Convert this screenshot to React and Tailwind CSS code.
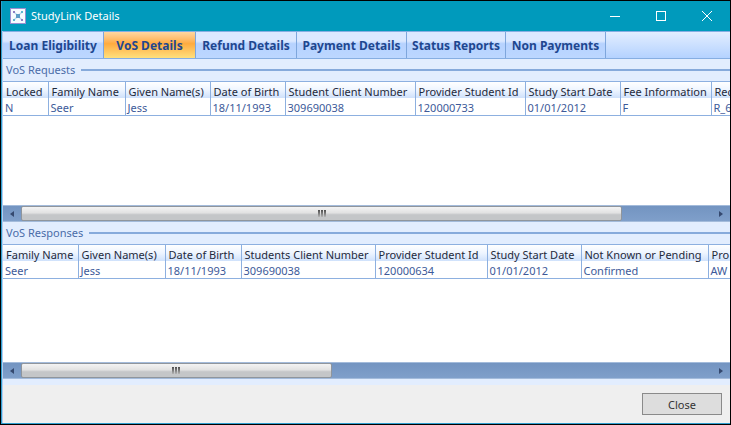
import { useState } from "react";

const tabs = [
  { name: "Loan Eligibility", width: "w-[101px]" },
  { name: "VoS Details", width: "w-[92px]" },
  { name: "Refund Details", width: "w-[101px]" },
  { name: "Payment Details", width: "w-[110px]" },
  { name: "Status Reports", width: "w-[99px]" },
  { name: "Non Payments", width: "w-[100px]" },
];

const requestColumns = [
  { title: "Locked", value: "N", width: "w-[45px]" },
  { title: "Family Name", value: "Seer", width: "w-[77px]" },
  { title: "Given Name(s)", value: "Jess", width: "w-[85px]" },
  { title: "Date of Birth", value: "18/11/1993", width: "w-[75px]" },
  { title: "Student Client Number", value: "309690038", width: "w-[130px]" },
  { title: "Provider Student Id", value: "120000733", width: "w-[110px]" },
  { title: "Study Start Date", value: "01/01/2012", width: "w-[95px]" },
  { title: "Fee Information", value: "F", width: "w-[91px]" },
  { title: "Rec", value: "R_6", width: "w-[90px]" },
];

const responseColumns = [
  { title: "Family Name", value: "Seer", width: "w-[75px]" },
  { title: "Given Name(s)", value: "Jess", width: "w-[87px]" },
  { title: "Date of Birth", value: "18/11/1993", width: "w-[76px]" },
  { title: "Students Client Number", value: "309690038", width: "w-[134px]" },
  { title: "Provider Student Id", value: "120000634", width: "w-[112px]" },
  { title: "Study Start Date", value: "01/01/2012", width: "w-[94px]" },
  { title: "Not Known or Pending", value: "Confirmed", width: "w-[127px]" },
  { title: "Pro", value: "AW", width: "w-[90px]" },
];

function AppIcon() {
  return (
    <svg viewBox="0 0 16 16" className="w-4 h-4" aria-hidden="true">
      <rect x="0.5" y="0.5" width="15" height="15" fill="#f6fbff" stroke="#9a8fd0" />
      <path d="M4 4l8 8M12 4l-8 8" stroke="#b9dcee" strokeWidth="1.4" />
      <rect x="6" y="6" width="4" height="4" fill="#5b9cc6" />
      <rect x="3" y="3" width="2" height="2" fill="#8a80c4" />
      <rect x="11" y="3" width="2" height="2" fill="#5fb5d0" />
      <rect x="3" y="11" width="2" height="2" fill="#5fb5d0" />
      <rect x="11" y="11" width="2" height="2" fill="#8a80c4" />
    </svg>
  );
}

function WindowButton({ label, children }) {
  return (
    <button type="button" aria-label={label} className="w-[46px] h-full flex items-center justify-center">
      <svg viewBox="0 0 10 10" className="w-[10px] h-[10px]" fill="none" stroke="#fff" strokeWidth="1">
        {children}
      </svg>
    </button>
  );
}

function TitleBar() {
  return (
    <header className="h-[30px] bg-[#009abc] flex items-center pl-2">
      <AppIcon />
      <h1 className="ml-[5px] text-[11px] leading-4 text-white">StudyLink Details</h1>
      <div className="ml-auto h-full flex">
        <WindowButton label="Minimize">
          <path d="M0 5.5h10" />
        </WindowButton>
        <WindowButton label="Maximize">
          <rect x="0.5" y="0.5" width="9" height="9" />
        </WindowButton>
        <WindowButton label="Exit">
          <path d="M0 0l10 10M10 0L0 10" />
        </WindowButton>
      </div>
    </header>
  );
}

function GroupHeader({ children }) {
  return (
    <div className="h-[22px] shrink-0 flex items-center pl-[3px] gap-[6px] bg-[#e2edfe]">
      <h2 className="text-[11px] leading-4 text-[#4a6ca8] whitespace-nowrap">{children}</h2>
      <div className="flex-1 h-[2px] bg-[#86aadb]" />
    </div>
  );
}

function Grid({ columns, height }) {
  return (
    <div className={"grow overflow-hidden bg-white border-t border-[#8db0e0] " + height}>
      <table className="table-fixed w-0 border-collapse text-[11px] leading-[13px] text-left whitespace-nowrap">
        <thead>
          <tr className="h-4 bg-linear-to-b from-white via-[#eef5ff] to-[#cfe1fb] text-[#1f2a3c]">
            {columns.map((col) => (
              <th key={col.title} className={"p-0 pt-[3px] pl-[3px] font-normal border-r border-[#8db0e0] " + col.width}>
                {col.title}
              </th>
            ))}
          </tr>
        </thead>
        <tbody>
          <tr className="h-[17px] text-[#3d5a99]">
            {columns.map((col) => (
              <td key={col.title} className="p-0 pt-[3px] pl-[2px] border-r border-b border-[#8db0e0]">
                {col.value}
              </td>
            ))}
          </tr>
        </tbody>
      </table>
    </div>
  );
}

function ScrollBar({ thumb }) {
  return (
    <div className="h-[17px] shrink-0 flex bg-linear-to-b from-[#7394c1] to-[#7f9fca] border-y border-[#a3bbdb]">
      <button type="button" aria-label="Scroll left" className="w-[18px] flex items-center justify-center">
        <svg viewBox="0 0 4 6" className="w-1 h-[6px]">
          <path d="M4 0v6L0 3z" fill="#35496f" />
        </svg>
      </button>
      <div className="flex-1">
        <div
          className={
            "h-[15px] flex items-center justify-center gap-[1px] rounded-xs border border-[#8f959c] bg-linear-to-b from-[#f3f3f3] from-0% via-[#e2e2e2] via-45% to-[#c4c6c8] to-60% " +
            thumb
          }
        >
          <span className="w-[2px] h-[7px] bg-linear-to-b from-[#4c4c4c] to-[#b5b5b5]" />
          <span className="w-[2px] h-[7px] bg-linear-to-b from-[#4c4c4c] to-[#b5b5b5]" />
          <span className="w-[2px] h-[7px] bg-linear-to-b from-[#4c4c4c] to-[#b5b5b5]" />
        </div>
      </div>
      <button type="button" aria-label="Scroll right" className="w-[18px] flex items-center justify-center">
        <svg viewBox="0 0 4 6" className="w-1 h-[6px]">
          <path d="M0 0v6l4-3z" fill="#35496f" />
        </svg>
      </button>
    </div>
  );
}

export default function App() {
  const [active, setActive] = useState("VoS Details");

  return (
    <div className="min-h-screen flex flex-col bg-black p-[1px] font-['Noto_Sans','Open_Sans',sans-serif]">
      <div className="grow flex flex-col border-l border-b border-[#2f9fd0]">
        <TitleBar />

        <div className="grow flex flex-col border-l border-[#b5cdf0]">
          <nav className="h-7 shrink-0 flex border-y border-[#86aee2] bg-linear-to-b from-[#e3eeff] to-[#b4d2ff]">
            {tabs.map((tab) => (
              <button
                key={tab.name}
                type="button"
                onClick={() => setActive(tab.name)}
                className={
                  "pt-[2px] border-r border-[#7ea6dc] text-xs font-bold text-[#1f478f] whitespace-nowrap " +
                  tab.width +
                  (active === tab.name
                    ? " bg-linear-to-b from-[#ffd7a0] from-0% via-[#ffab3f] via-45% to-[#ffe07c]"
                    : " bg-linear-to-b from-[#dbe8ff] from-35% via-[#b6d2ff] via-45% to-[#bcd7ff]")
                }
              >
                {tab.name}
              </button>
            ))}
          </nav>

          <GroupHeader>VoS Requests</GroupHeader>
          <Grid columns={requestColumns} height="basis-[124px]" />
          <ScrollBar thumb="w-[87%]" />

          <GroupHeader>VoS Responses</GroupHeader>
          <Grid columns={responseColumns} height="basis-[118px]" />
          <ScrollBar thumb="w-[45%]" />

          <div className="h-[6px] shrink-0 bg-[#e2edfe]" />
          <footer className="h-[38px] shrink-0 flex items-center justify-end pr-2 bg-[#efefef]">
            <button
              type="button"
              className="w-20 h-[22px] pt-[1px] text-[11px] leading-4 text-[#333] bg-[#dddddd] border border-[#8a8a8a]"
            >
              Close
            </button>
          </footer>
        </div>
      </div>
    </div>
  );
}
